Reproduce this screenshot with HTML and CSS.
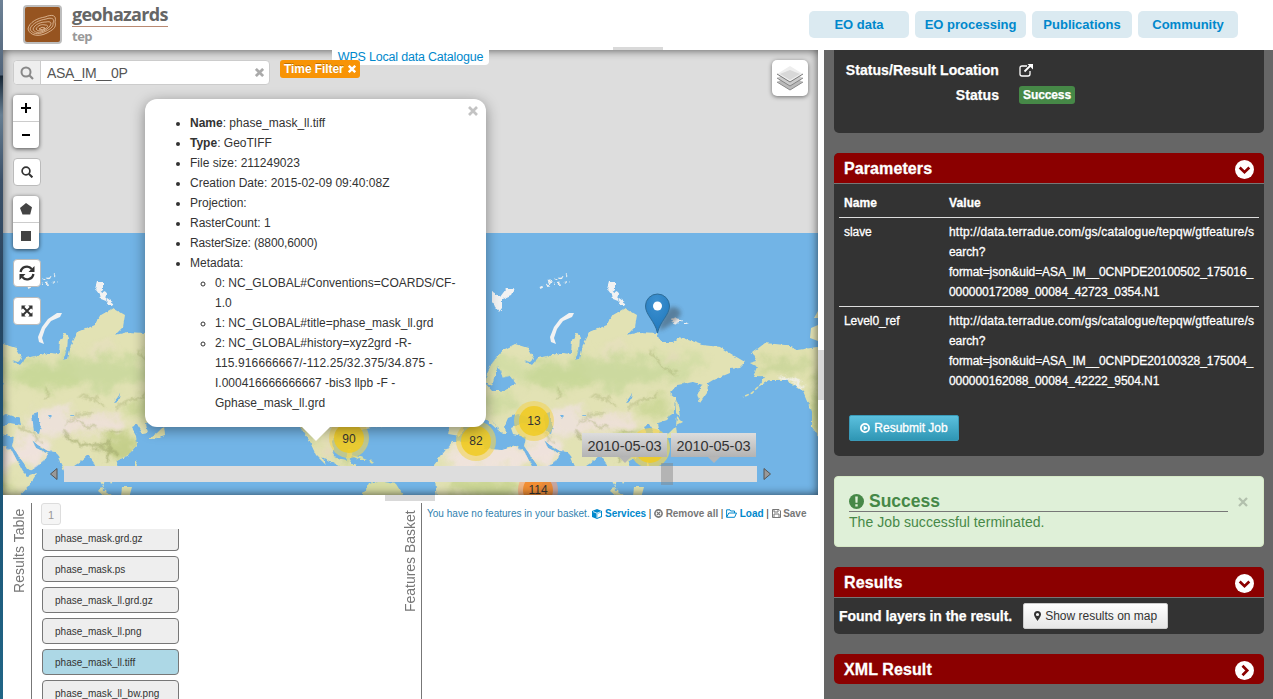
FILE: index.html
```html
<!DOCTYPE html>
<html lang="en">
<head>
<meta charset="utf-8">
<title>geohazards tep</title>
<link rel="stylesheet" href="styles.css">
</head>
<body>
<div class="app">
  <header class="header">
    <div class="brand">
      <svg class="brand-logo" width="39" height="39" viewBox="0 0 39 39">
        <rect x="1" y="1" width="37" height="37" rx="3" fill="#965420" stroke="#bdbdbd" stroke-width="2"/>
        <g fill="none" stroke="#e9c6a6" stroke-width=".8">
          <path d="M5 24C6 17 15 13 22 12C29 9 34 10 32 17C34 23 29 25 24 28C16 32 7 31 5 24Z"/>
          <path d="M7 24C9 18 17 15 23 14C29 12 32 14 30 18C31 22 26 25 21 27C15 30 9 29 7 24Z"/>
          <path d="M10 24C12 19 18 17 23 17C28 16 29 18 27 21C25 24 21 26 18 27C14 28 11 27 10 24Z"/>
          <path d="M13 24C15 20 19 19 22 20C26 20 25 22 22 24C19 26 15 27 13 24Z"/>
          <path d="M16 24Q19 21 22 23Q20 26 16 24Z"/>
        </g>
      </svg>
      <div class="brand-text">
        <span class="brand-name">geohazards</span>
        <span class="brand-sub">tep</span>
      </div>
    </div>
    <nav class="nav">
      <a class="nav-link">EO data</a>
      <a class="nav-link nav-wide">EO processing</a>
      <a class="nav-link">Publications</a>
      <a class="nav-link">Community</a>
    </nav>
  </header>

  <div class="main">
    <div class="left">
      <section class="map">
        <svg class="map-canvas" viewBox="3 50 815 445" width="815" height="445">
          <defs>
            <filter id="coast" x="-5%" y="-5%" width="110%" height="110%" color-interpolation-filters="sRGB">
              <feTurbulence type="fractalNoise" baseFrequency=".2" numOctaves="2" seed="4"/>
              <feDisplacementMap in="SourceGraphic" scale="4" xChannelSelector="R" yChannelSelector="G"/>
            </filter>
            <filter id="soft" x="-20%" y="-30%" width="140%" height="160%" color-interpolation-filters="sRGB">
              <feGaussianBlur in="SourceGraphic" stdDeviation="4" result="b"/>
              <feTurbulence type="fractalNoise" baseFrequency=".05" numOctaves="4" seed="9" result="n"/>
              <feDisplacementMap in="b" in2="n" scale="26" xChannelSelector="R" yChannelSelector="G"/>
            </filter>
            <filter id="ridge" x="-20%" y="-20%" width="140%" height="140%" color-interpolation-filters="sRGB">
              <feGaussianBlur in="SourceGraphic" stdDeviation="1.2" result="b"/>
              <feTurbulence type="fractalNoise" baseFrequency=".12" numOctaves="3" seed="3" result="n"/>
              <feDisplacementMap in="b" in2="n" scale="10" xChannelSelector="R" yChannelSelector="G"/>
            </filter>
            <filter id="shade" x="-20%" y="-20%" width="140%" height="140%"><feGaussianBlur stdDeviation="2"/></filter>
            <path id="asia" d="M-25 373L-20 363L-9 350L3 344L16 348L22 358L18 362L11 360L20 365L26 358L35 356L50 353L59 354L60 340L65 332L68 338L67 350L63 360L68 359L71 345L78 332L95 325L101 315L113 308L125 315L123 327L115 335L128 332L145 333L148 342L161 342L168 337L190 345L208 347L221 355L233 362L228 367L218 368L218 373L201 380L196 383L195 393L188 403L185 393L191 385L181 382L165 385L158 393L163 397L163 410L155 420L146 423L148 433L143 434L137 424L131 427L136 436L137 445L128 455L117 461L118 475L112 484L106 470L101 466L104 488L98 478L94 463L88 455L80 462L71 468L68 480L60 462L56 452L48 451L38 445L32 440L36 448L42 451L48 454L44 461L31 471L27 468L12 446L14 437L1 434L-1 428L10 423L21 425L20 419L6 414L-4 418L-7 425L-6 434L-13 431L-20 418L-14 430L-21 424L-30 417L-45 420L-52 436L-64 434L-62 422L-48 420L-52 410L-36 402L-26 395L-27 383L-20 391L-8 391L4 384L-2 376L-9 378L-14 365L-20 386L-26 382Z"/>
            <path id="africa" d="M-60 442L-30 441L-28 449L-10 450L4 446L12 451L23 472L27 476L37 473L29 486L14 502L-75 502L-78 465Z"/>
            <path id="america" d="M750 363L757 361L752 353L765 343L785 345L797 350L818 347L880 348L910 320L940 350L980 360L960 400L900 425L862 432L865 443L862 442L851 433L844 441L846 457L858 460L860 450L865 450L862 463L869 466L873 476L868 475L847 464L834 457L828 444L838 465L828 455L821 440L812 427L812 412L803 391L787 380L770 380L758 387L765 377L753 377L757 367Z"/>
            <clipPath id="asiaClip"><use href="#asia"/><use href="#africa"/></clipPath>
            <clipPath id="americaClip"><use href="#america"/></clipPath>
            <g id="oldWorld">
              <g filter="url(#coast)">
                <g fill="#e2e2b4"><use href="#asia"/><use href="#africa"/></g>
                <path fill="#f2f2f2" d="M97 282l6 0 0 7-5 4-3-4zM99 290l8 4-1 7-5-2zM107 298l7 5-2 3-6-1zM-20 292l8 5 6-8 8 0-3 6-9 4 0 9-3 4-7-10zM159 319l7-2 4 5-8 3zM172 322l5 2-5 0z"/>
                <path stroke="#eef0f0" stroke-width="2" stroke-dasharray="3 4 1 3" fill="none" d="M28 288L55 275M35 286L57 282M36 281L50 277"/>
                <path fill="#dfe0ac" d="M163 397l3 8 2 12-4-4zM165 417l5 5-6 3zM164 426l1 9-12 4-5 0 9-6zM-50 386l5 0 5 13-11 3 4-7zM101 487l17 14-6 2-14-12zM122 487l10 0-3 11-8-3zM135 461l5 8 0 8-5-7zM155 497l14 1 10 9-16-4zM198 487l3 1z"/>
              </g>
              <path fill="#f2f2f2" d="M62 313L57 313L48 319L42 327L38 337L39 342L44 344L42 338L45 329L51 321L60 317Z"/>
              <g clip-path="url(#asiaClip)">
                <g filter="url(#soft)">
                  <ellipse cx="90" cy="372" rx="85" ry="15" fill="#ccd99f"/>
                  <ellipse cx="45" cy="378" rx="35" ry="12" fill="#c9d899"/>
                  <ellipse cx="165" cy="362" rx="30" ry="9" fill="#d3dda6"/>
                  <ellipse cx="-5" cy="368" rx="22" ry="12" fill="#d3dda6"/>
                  <ellipse cx="-15" cy="403" rx="22" ry="9" fill="#d0dba2"/>
                  <ellipse cx="55" cy="421" rx="28" ry="12" fill="#ece1d8"/>
                  <ellipse cx="95" cy="424" rx="33" ry="10" fill="#ede0d6"/>
                  <ellipse cx="30" cy="450" rx="23" ry="14" fill="#efe2dc"/>
                  <ellipse cx="-25" cy="455" rx="43" ry="15" fill="#efe3db"/>
                  <ellipse cx="120" cy="447" rx="17" ry="13" fill="#c5cf8b"/>
                  <ellipse cx="145" cy="408" rx="15" ry="9" fill="#ccd798"/>
                  <ellipse cx="-25" cy="489" rx="40" ry="11" fill="#cad594"/>
                  <ellipse cx="100" cy="350" rx="13" ry="5" fill="#e6dfbf"/>
                  <ellipse cx="157" cy="355" rx="7" ry="9" fill="#e2dcb8"/>
                </g>
                <g filter="url(#ridge)" fill="none" stroke="#a0a86b" opacity=".65">
                  <path stroke-width="3" d="M64 431Q76 447 98 447L108 441L111 448L105 462M100 448L119 455"/>
                  <path stroke-width="1.500" d="M65 424L78 415L92 413M80 396L96 400L105 407M115 410L128 401L146 394M20 426L35 434L40 442M108 430L122 433M48 388L45 400M75 420L95 428M140 350L150 368L165 374"/>
                </g>
              </g>
              <g filter="url(#coast)" fill="#70b3e5">
                <path d="M32 415l6-2 0 7 3 6-2 8-5-2-1-9zM113 402l7-9-2 8z"/>
                <path d="M48 415l3 0-1 3zM68 415l7 0-3 1z"/>
              </g>
            </g>
            <g id="newWorld">
              <use href="#america" fill="#e1e1b0" filter="url(#coast)"/>
              <g clip-path="url(#americaClip)">
                <g filter="url(#soft)"><ellipse cx="783" cy="365" rx="28" ry="7" fill="#cbd69b"/><ellipse cx="823" cy="405" rx="11" ry="33" fill="#c0cc8c"/><ellipse cx="857" cy="455" rx="8" ry="7" fill="#bccb86"/><ellipse cx="838" cy="449" rx="7" ry="10" fill="#e4d9bd"/></g>
                <path d="M780 377L795 381L804 388" fill="none" stroke="#f4f2ef" stroke-width="3" filter="url(#ridge)"/>
              </g>
              <path d="M758 387L752 393L743 397" fill="none" stroke="#dfe0ac" stroke-width="1.500" stroke-dasharray="4 2"/>
              <path fill="#d6dca3" d="M862 455l10 2 7 3-7 0zM879 460l7 1-2 2zM869 506L881 483L890 481L908 484L922 506Z" filter="url(#coast)"/>
            </g>
            <radialGradient id="pinFill" cx=".45" cy=".2" r=".8"><stop offset="0" stop-color="#3e91d0"/><stop offset="1" stop-color="#1f78bd"/></radialGradient>
          </defs>
          <rect x="3" y="50" width="815" height="184" fill="#ddd"/>
          <rect x="3" y="233" width="815" height="262" fill="#72b4e6"/>
          <use href="#oldWorld"/><use href="#oldWorld" x="512"/>
          <use href="#newWorld" x="-512"/><use href="#newWorld"/>
          <path fill="#e4e3b5" d="M814 318l4-7 0 7zM811 328l7-3 0 16-8-3z"/>
          <g class="cluster">
            <circle cx="349" cy="438" r="20" fill="#f1d357" opacity=".6"/><circle cx="349" cy="438" r="15" fill="#f0ca22" opacity=".85"/>
            <circle cx="476" cy="441" r="20" fill="#f1d357" opacity=".6"/><circle cx="476" cy="441" r="15" fill="#f0ca22" opacity=".85"/>
            <circle cx="534" cy="421" r="20" fill="#f1d357" opacity=".6"/><circle cx="534" cy="421" r="15" fill="#f0ca22" opacity=".85"/>
            <circle cx="650" cy="448" r="20" fill="#f1d357" opacity=".7"/><circle cx="650" cy="448" r="15" fill="#f0ca22" opacity=".85"/>
            <circle cx="538" cy="490" r="20" fill="#fd9c73" opacity=".6"/><circle cx="538" cy="490" r="15" fill="#f18017" opacity=".75"/>
            <text x="349" y="443">90</text><text x="476" y="445">82</text><text x="534" y="425">13</text><text x="538" y="494">114</text>
          </g>
          <path d="M659 331Q675 324 681 314Q680 306 671 307Q661 315 659 331" fill="#333" opacity=".4" filter="url(#shade)"/>
          <path d="M657.500 333C655 321 645.500 315 645.500 306A12 12 0 0 1 669.500 306C669.500 315 660 321 657.500 333Z" fill="url(#pinFill)" stroke="#2e6c97" stroke-width="1"/>
          <circle cx="657.500" cy="306" r="4.500" fill="#fff"/>
        </svg>
        <div class="map-edge"></div>
        <div class="search">
          <span class="search-icon"><svg width="14" height="14" viewBox="0 0 14 14"><circle cx="6" cy="6" r="4.500" fill="none" stroke="#888" stroke-width="2"/><path d="M9.300 9.300L13 13" stroke="#888" stroke-width="2.200"/></svg></span>
          <span class="search-text">ASA_IM__0P</span>
          <svg class="cross" width="9" height="9" viewBox="0 0 10 10"><path d="M1 1L9 9M9 1L1 9" stroke="#aaa" stroke-width="3"/></svg>
        </div>
        <a class="catalogue">WPS Local data Catalogue</a>
        <span class="time-filter">Time Filter <svg width="8" height="8" viewBox="0 0 10 10"><path d="M1 1L9 9M9 1L1 9" stroke="#fff" stroke-width="3"/></svg></span>
        <div class="tools">
          <div class="tool-group zoom">
            <span><svg width="10" height="10"><path d="M0 5H10M5 0V10" stroke="#000" stroke-width="2"/></svg></span>
            <span><svg width="8" height="10"><path d="M0 5H8" stroke="#000" stroke-width="2"/></svg></span>
          </div>
          <div class="tool"><svg width="12" height="12" viewBox="0 0 12 12"><circle cx="5" cy="5" r="3.900" fill="none" stroke="#333" stroke-width="1.700"/><path d="M8 8L11.400 11.400" stroke="#333" stroke-width="2"/></svg></div>
          <div class="tool-group draw">
            <span><svg width="12" height="12"><path d="M6 0L12 4.300L10.200 11.500H2.500L0 5Z" fill="#444"/></svg></span>
            <span><svg width="10" height="10"><path d="M0 0H10V10H0Z" fill="#444"/></svg></span>
          </div>
          <div class="tool refresh"><svg width="16" height="16" viewBox="0 0 16 16"><path d="M1.600 7A6.300 6.300 0 0 1 12.700 4M14.400 9A6.300 6.300 0 0 1 3.300 12" fill="none" stroke="#333" stroke-width="2.300"/><path d="M15.500 1V7H9.500ZM.5 15V9H6.500Z" fill="#333"/></svg></div>
          <div class="tool expand"><svg width="12" height="12" viewBox="0 0 12 12"><path d="M2 2L10 10M10 2L2 10" stroke="#333" stroke-width="1.900"/><path d="M.5.5H4.800L.5 4.800ZM11.500.5V4.800L7.200 .5ZM.5 11.500V7.200L4.800 11.500ZM11.500 11.500H7.200L11.500 7.200Z" fill="#333"/></svg></div>
        </div>
        <div class="layers"><svg width="26" height="26" viewBox="0 0 26 26"><path d="M0 17L13 10L26 17L13 25Z" fill="#b9b9b9"/><path d="M0 17L13 25L26 17" fill="none" stroke="#8a8a8a"/><path d="M0 13L13 6L26 13L13 21Z" fill="#ccc"/><path d="M0 13L13 21L26 13" fill="none" stroke="#858585"/><path d="M0 9L13 1L26 9L13 17Z" fill="#eee"/><path d="M3 9L13 5L23 9L13 15Z" fill="#d8d8d8"/><path d="M0 9L13 17L26 9" fill="none" stroke="#777"/></svg></div>
        <div class="popup">
          <svg class="popup-close" width="10" height="10" viewBox="0 0 10 10"><path d="M1 1L9 9M9 1L1 9" stroke="#c3c3c3" stroke-width="2.700"/></svg>
          <ul class="meta">
            <li><b>Name</b>: phase_mask_ll.tiff</li>
            <li><b>Type</b>: GeoTIFF</li>
            <li>File size: 211249023</li>
            <li>Creation Date: 2015-02-09 09:40:08Z</li>
            <li>Projection:</li>
            <li>RasterCount: 1</li>
            <li class="tight">RasterSize: (8800,6000)</li>
            <li>Metadata:
              <ul>
                <li>0: NC_GLOBAL#Conventions=COARDS/CF-<br>1.0</li>
                <li>1: NC_GLOBAL#title=phase_mask_ll.grd</li>
                <li>2: NC_GLOBAL#history=xyz2grd -R-<br><span class="loose">115.916666667/-112.25/32.375/34.875 -</span><br>I.000416666666667 -bis3 llpb -F -<br>Gphase_mask_ll.grd</li>
              </ul>
            </li>
          </ul>
          <span class="popup-tip"></span>
        </div>
        <div class="slider">
          <svg width="8" height="12"><path d="M7 .5V11.500L.5 6Z" fill="#999" stroke="#555"/></svg>
          <div class="slider-track"><span class="slider-handle"></span></div>
          <svg width="8" height="12"><path d="M1 .5V11.500L7.500 6Z" fill="#999" stroke="#555"/></svg>
        </div>
        <div class="dates"><span class="date">2010-05-03</span><span class="date">2010-05-03</span></div>
      </section>

      <section class="bottom">
        <div class="vtab">Results Table</div>
        <div class="results">
          <span class="page">1</span>
          <div class="files">
            <div class="file">phase_mask.grd.gz</div>
            <div class="file">phase_mask.ps</div>
            <div class="file">phase_mask_ll.grd.gz</div>
            <div class="file">phase_mask_ll.png</div>
            <div class="file selected">phase_mask_ll.tiff</div>
            <div class="file">phase_mask_ll_bw.png</div>
          </div>
        </div>
        <div class="vtab basket-tab">Features Basket</div>
        <div class="basket">
          <span class="basket-msg">You have no features in your basket.</span>
          <svg width="10" height="10" viewBox="0 0 10 10"><path d="M5 0L10 2V8L5 10L0 8V2Z" fill="#08c"/><path d="M1 2.600L5 4.200L9 2.600M5 4.200V9" fill="none" stroke="#fff" stroke-width=".8"/><path d="M5.500 4.800L9 3.400V7.300L5.500 8.800Z" fill="#fff"/></svg>
          <b class="blue">Services</b><i>|</i>
          <svg width="9" height="9" viewBox="0 0 10 10"><circle cx="5" cy="5" r="4" fill="none" stroke="#777" stroke-width="1.800"/><path d="M3.200 3.200L6.800 6.800M6.800 3.200L3.200 6.800" stroke="#777" stroke-width="1.500"/></svg>
          <b>Remove all</b><i>|</i>
          <svg width="11" height="9" viewBox="0 0 11 9"><path d="M.6 8V.8H4L4.600 2H8.500V4M.6 8.300L2.800 4H10.500L8.600 8.300Z" fill="none" stroke="#08c"/></svg>
          <b class="blue">Load</b><i>|</i>
          <svg width="9" height="9" viewBox="0 0 9 9"><path d="M.5.5H7L8.500 2V8.500H.5ZM2 .5V3H6V.5M2 8.500V5H7V8.500" fill="none" stroke="#777"/></svg>
          <b>Save</b>
        </div>
      </section>
      <span class="grip grip-top"></span>
      <span class="grip grip-bottom"></span>
      <span class="grip grip-right"></span>
    </div>

    <aside class="side">
      <section class="card status">
        <dl class="status-list">
          <dt>Status/Result Location</dt>
          <dd><svg width="14" height="13" viewBox="0 0 14 13"><path d="M8 2H3Q1 2 1 4V10Q1 12 3 12H9Q11 12 11 10V7" fill="none" stroke="#fff" stroke-width="1.300"/><path d="M5.500 7.500L11.500 1.500" stroke="#fff" stroke-width="1.800"/><path d="M8.500 0H14V5.500Z" fill="#fff"/></svg></dd>
          <dt>Status</dt>
          <dd><span class="badge">Success</span></dd>
        </dl>
      </section>
      <section class="card">
        <h2 class="card-head"><span>Parameters</span><svg width="19" height="19" viewBox="0 0 19 19"><circle cx="9.500" cy="9.500" r="9.500" fill="#fff"/><path d="M4.700 7.500L9.500 12.200L14.300 7.500" fill="none" stroke="#8b0000" stroke-width="2.700"/></svg></h2>
        <div class="params">
          <div class="prow phead"><b>Name</b><b>Value</b></div>
          <div class="prow"><span>slave</span><span><span class="url">http://data.terradue.com/gs/catalogue/tepqw/gtfeature/s</span><br>earch?<br>format=json&amp;uid=ASA_IM__0CNPDE20100502_175016_<br>000000172089_00084_42723_0354.N1</span></div>
          <div class="prow"><span>Level0_ref</span><span><span class="url">http://data.terradue.com/gs/catalogue/tepqw/gtfeature/s</span><br>earch?<br>format=json&amp;uid=ASA_IM__0CNPDE20100328_175004_<br>000000162088_00084_42222_9504.N1</span></div>
        </div>
        <a class="btn btn-info"><svg width="10" height="10" viewBox="0 0 10 10"><circle cx="5" cy="5" r="4.100" fill="none" stroke="#fff" stroke-width="1.800"/><path d="M3.700 2.600L7.600 5L3.700 7.400Z" fill="#fff"/></svg>Resubmit Job</a>
      </section>
      <section class="alert">
        <h3 class="alert-title"><svg width="15" height="15" viewBox="0 0 15 15"><circle cx="7.500" cy="7.500" r="7.500" fill="#468847"/><path d="M6.200 2.500H8.800L8.500 8.800H6.500ZM6.300 10.200H8.700V12.500H6.300Z" fill="#dff0d8"/></svg>Success</h3>
        <p class="alert-text">The Job successful terminated.</p>
        <svg class="alert-close" width="10" height="10" viewBox="0 0 10 10"><path d="M1 1L9 9M9 1L1 9" stroke="#b2c0ad" stroke-width="2.300"/></svg>
      </section>
      <section class="card">
        <h2 class="card-head"><span>Results</span><svg width="19" height="19" viewBox="0 0 19 19"><circle cx="9.500" cy="9.500" r="9.500" fill="#fff"/><path d="M4.700 7.500L9.500 12.200L14.300 7.500" fill="none" stroke="#8b0000" stroke-width="2.700"/></svg></h2>
        <div class="found"><b>Found layers in the result.</b><a class="btn btn-plain"><svg width="7" height="10" viewBox="0 0 7 10"><path fill-rule="evenodd" d="M3.500 10Q0 5 0 3.500A3.500 3.500 0 0 1 7 3.500Q7 5 3.500 10ZM3.500 1.900A1.600 1.600 0 1 0 3.500 5.100A1.600 1.600 0 1 0 3.500 1.900Z" fill="#333"/></svg>Show results on map</a></div>
      </section>
      <section class="card">
        <h2 class="card-head last"><span>XML Result</span><svg width="19" height="19" viewBox="0 0 19 19"><circle cx="9.500" cy="9.500" r="9.500" fill="#fff"/><path d="M7.500 4.700L12.200 9.500L7.500 14.300" fill="none" stroke="#8b0000" stroke-width="2.700"/></svg></h2>
      </section>
    </aside>
  </div>
</div>
</body>
</html>
```

FILE: styles.css
```css
* { box-sizing: border-box; }
body {
  margin: 0;
  width: 1273px;
  height: 699px;
  overflow: hidden;
  padding-left: 3px;
  background: linear-gradient(#6e8296 0, #51647a 75px, #152534 76px, #667e92 115px, #3b5068 180px, #27435e 300px, #1d5273 420px, #206586 699px);
  font-family: "Liberation Sans", Arial, sans-serif;
  font-size: 12px;
  color: #333;
}
svg { display: block; flex: none; }
.app { height: 699px; background: #fff; display: flex; flex-direction: column; }
.header { height: 50px; flex: none; display: flex; justify-content: space-between; padding: 5px 35px 0 20px; }
.brand { display: flex; gap: 10px; }
.brand-text { display: flex; flex-direction: column; font-family: "Open Sans", sans-serif; font-weight: bold; }
.brand-name { font-size: 18px; line-height: 19px; height: 22px; width: 96px; color: #666; border-bottom: 1px solid #b98971; letter-spacing: -.72px; }
.brand-sub { font-size: 13px; line-height: 18px; color: #999; letter-spacing: -.5px; }
.nav { display: flex; gap: 6px; padding-top: 6px; }
.nav-link { width: 100px; height: 27px; border-radius: 5px; background: #dbeaf1; color: #08c; font-weight: bold; font-size: 13px; line-height: 27px; text-align: center; }
.nav-wide { width: 111px; }
.main { display: flex; height: 649px; gap: 6px; }
.left { width: 815px; position: relative; display: flex; flex-direction: column; }
.map { height: 445px; flex: none; position: relative; overflow: hidden; }
.map-edge { position: absolute; inset: 0; box-shadow: inset 0 0 10px rgba(0,0,0,.65); }
.cluster { font-size: 12px; text-anchor: middle; fill: #333; }

.search { position: absolute; left: 10px; top: 10px; width: 257px; height: 25px; border: 1px solid #ccc; border-radius: 4px; background: #fff; display: flex; align-items: center; }
.search-icon { width: 27px; height: 100%; background: #eee; border-right: 1px solid #ccc; border-radius: 4px 0 0 4px; display: flex; align-items: center; justify-content: center; }
.search-text { flex: 1; padding-left: 6px; font-size: 14px; color: #555; letter-spacing: -.35px; }
.cross { margin-right: 5px; }
.catalogue { position: absolute; left: 329px; top: 0; width: 157px; height: 15px; border-radius: 0 0 4px 4px; background: #fff; color: #08c; font-size: 12.500px; line-height: 14px; text-align: center; white-space: nowrap; letter-spacing: -.2px; }
.time-filter { position: absolute; left: 277px; top: 10px; width: 80px; height: 18px; border-radius: 3px; background: #f89406; color: #fff; font-weight: bold; line-height: 18px; padding-left: 4px; display: flex; align-items: center; gap: 4px; white-space: nowrap; letter-spacing: -.08px; text-shadow: 0 -1px 0 rgba(0,0,0,.25); }
.tools { position: absolute; left: 10px; top: 45px; display: flex; flex-direction: column; }
.tool-group { width: 26px; height: 53px; background: #fff; border-radius: 4px; box-shadow: 0 1px 4px rgba(0,0,0,.65); display: flex; flex-direction: column; }
.tool-group span { flex: 1; display: flex; align-items: center; justify-content: center; }
.tool-group span + span { border-top: 1px solid #ccc; }
.tool { width: 28px; height: 28px; border: 1px solid #bbb; border-radius: 4px; background: #fff; display: flex; align-items: center; justify-content: center; margin: 10px 0; }
.refresh { margin-bottom: 0; }
.layers { position: absolute; left: 769px; top: 10px; width: 36px; height: 36px; border-radius: 5px; background: #fff; box-shadow: 0 1px 4px rgba(0,0,0,.5); display: flex; align-items: center; justify-content: center; }
.popup { position: absolute; left: 142px; top: 49px; width: 341px; height: 328px; background: #fff; border-radius: 12px; box-shadow: 0 3px 14px rgba(0,0,0,.4); padding-top: 14px; }
.popup-close { position: absolute; right: 8px; top: 7px; }
.popup-tip { position: absolute; left: 157px; top: 328px; width: 28px; height: 14px; background: #fff; clip-path: polygon(0 0, 100% 0, 50% 100%); }
.meta { margin: 0; padding-left: 45px; line-height: 20px; white-space: nowrap; }
.meta ul { margin: 0; padding-left: 25px; }
.tight { letter-spacing: -.12px; }
.loose { letter-spacing: .13px; }

.slider { position: absolute; left: 47px; top: 413px; display: flex; align-items: center; gap: 6px; }
.slider-track { width: 693px; height: 16px; margin: 3px 0; background: #ddd; position: relative; }
.slider-handle { position: absolute; left: 597px; top: -3px; width: 12px; height: 22px; background: rgba(130,130,130,.45); }
.dates { position: absolute; left: 579px; top: 383px; display: flex; gap: 4px; }
.date { position: relative; width: 85px; height: 24px; background: linear-gradient(#ddd, #b3b3b3); color: #333; font-size: 14.500px; line-height: 27px; text-align: center; }
.date::after { content: ""; position: absolute; left: 37px; top: 24px; border: 6px solid transparent; border-top-color: #b5b5b5; }

.bottom { height: 204px; display: flex; padding-top: 8px; overflow: hidden; }
.vtab { flex: none; width: 29px; border-left: 1px solid #777; writing-mode: vertical-rl; transform: rotate(180deg); color: #777; font-size: 14px; text-align: right; line-height: 16px; padding-bottom: 6px; padding-right: 8px; letter-spacing: .05px; white-space: nowrap; }
.results { flex: none; width: 361px; padding-left: 9px; display: flex; flex-direction: column; gap: 4px; }
.page { width: 20px; height: 22px; flex: none; border: 1px solid #ddd; border-radius: 3px; background: #f5f5f5; color: #999; font-size: 11px; line-height: 22px; text-align: center; }
.files { padding-left: 1px; overflow: hidden; display: flex; flex-direction: column; gap: 5px; }
.file { width: 137px; height: 26px; flex: none; border: 1px solid #777; border-radius: 4px; background: #eee; font-size: 10px; line-height: 26px; padding-left: 12px; letter-spacing: .02px; }
.file:first-child { height: 22px; border-top: 0; border-radius: 0 0 4px 4px; line-height: 20px; }
.selected { background: #add8e6; }
.basket-tab { padding-bottom: 7px; letter-spacing: -.02px; padding-right: 9px; }
.basket { display: flex; align-items: center; height: 21px; padding-left: 5px; gap: 2.700px; font-size: 10px; color: #777; white-space: nowrap; letter-spacing: -.03px; }
.basket-msg { color: #3082af; letter-spacing: .02px; }
.basket i { font-style: normal; color: #333; }
.basket .blue { color: #08c; }
.grip { position: absolute; background: #d9d9d9; }
.grip-top { left: 610px; top: -3px; width: 50px; height: 3px; }
.grip-bottom { left: 382px; top: 445px; width: 50px; height: 6px; }
.grip-right { left: 815px; top: 300px; width: 6px; height: 50px; }

.side { width: 449px; background: #666; padding: 0 9px 0 10px; display: flex; flex-direction: column; gap: 20px; color: #fff; overflow: hidden; }
.card { background: #333; border-radius: 5px; overflow: hidden; flex: none; }
.status { height: 83px; border-radius: 0 0 5px 5px; padding-top: 8px; }
.status-list { margin: 0; display: grid; grid-template-columns: 165px 1fr; column-gap: 20px; line-height: 25px; font-size: 14px; font-weight: bold; letter-spacing: .07px; -webkit-text-stroke: .25px #fff; }
.status-list dt { text-align: right; white-space: nowrap; }
.status-list dd { margin: 0; display: flex; align-items: center; }
.badge { height: 18px; background: #468847; border-radius: 3px; padding: 0 4px; font-size: 12px; line-height: 18px; letter-spacing: -.1px; width: 56px; margin-top: -2px; }
.card-head { margin: 0; height: 31px; border-bottom: 1px solid #777; background: #8b0000; display: flex; align-items: center; justify-content: space-between; padding: 2px 10px 0; font-size: 16px; letter-spacing: .1px; -webkit-text-stroke: .3px #fff; }
.last { height: 30px; border: 0; }
.params { margin: 0 5px; letter-spacing: -.06px; -webkit-text-stroke: .3px #fff; }
.url { letter-spacing: .2px; }
.prow { display: grid; grid-template-columns: 105px 1fr; padding: 4px 0 4px 5px; line-height: 20px; white-space: nowrap; }
.prow + .prow { border-top: 1px solid #ddd; }
.phead { padding: 9px 0 5px 5px; height: 33px; letter-spacing: .1px; }
.btn { display: flex; align-items: center; justify-content: center; gap: 4px; height: 26px; border-radius: 2px; }
.btn-info { width: 110px; margin: 20px 15px 15px; background: linear-gradient(#5bc0de, #2f96b4); border: 1px solid #3a9ab8; -webkit-text-stroke: .3px #fff; }
.alert { position: relative; height: 71px; flex: none; background: #dff0d8; border: 1px solid #d6e9c6; border-radius: 4px; padding: 14px 35px 0 14px; color: #468847; }
.alert-title { margin: 0; height: 21px; border-bottom: 1px solid #777; display: flex; align-items: center; gap: 5px; font-size: 17.500px; line-height: 20px; }
.alert-text { margin: 0; font-size: 14px; line-height: 21px; letter-spacing: .06px; }
.alert-close { position: absolute; right: 15px; top: 20px; }
.found { height: 36px; display: flex; align-items: center; gap: 11px; padding-left: 5px; font-size: 14px; white-space: nowrap; }
.found b { letter-spacing: -.04px; -webkit-text-stroke: .25px #fff; }
.btn-plain { width: 145px; background: linear-gradient(#fff, #e6e6e6); border: 1px solid #ccc; color: #333; font-size: 12px; }
```
